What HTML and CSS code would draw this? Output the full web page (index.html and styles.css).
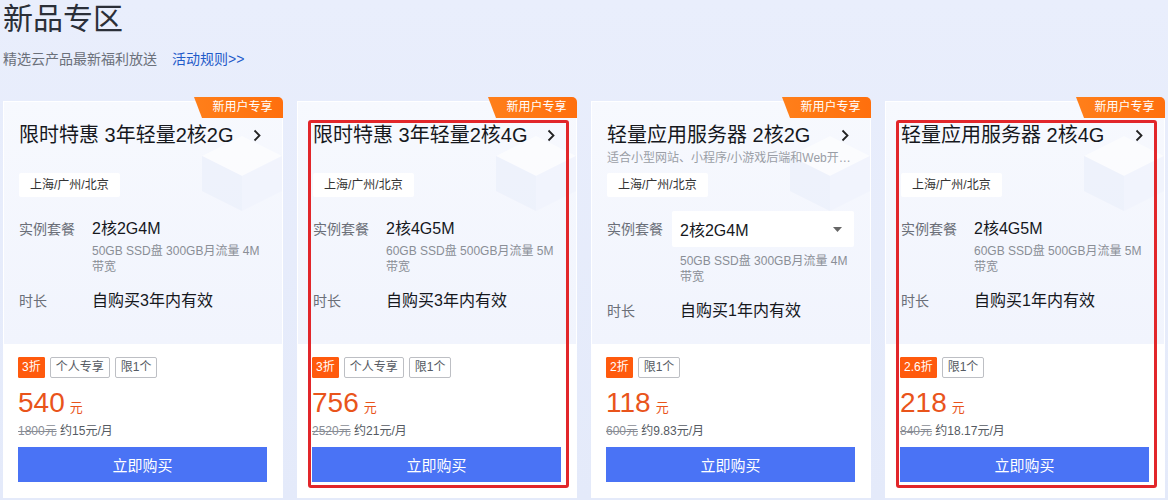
FILE: index.html
```html
<!DOCTYPE html>
<html lang="zh-CN">
<head>
<meta charset="utf-8">
<title>新品专区</title>
<link rel="stylesheet" href="styles.css">
</head>
<body>
<div class="page">
  <header class="hd">
    <h1 class="hd-title">新品专区</h1>
    <p class="hd-sub">精选云产品最新福利放送<a class="hd-link" href="#">活动规则&gt;&gt;</a></p>
  </header>

  <div class="cards">
    <!-- card 1 -->
    <div class="card">
      <span class="badge">新用户专享</span>
      <div class="card-top">
        <svg class="decor" width="110" height="110" viewBox="0 0 110 110"><path d="M20 40 L60 20 L100 40 L60 60 Z" fill="#fff"/><path d="M20 40 L60 60 L60 95 L20 75 Z" fill="#eaeffb"/><path d="M60 60 L100 40 L100 75 L60 95 Z" fill="#f0f3fd"/></svg>
        <div class="head">
          <div class="title-row"><h3 class="title">限时特惠 3年轻量2核2G</h3><svg class="chev" width="8" height="13" viewBox="0 0 8 13"><path d="M1.5 1.5 L6.5 6.5 L1.5 11.5" fill="none" stroke="#222" stroke-width="1.8"/></svg></div>
        </div>
        <span class="region">上海/广州/北京</span>
        <div class="spec">
          <span class="label">实例套餐</span>
          <div class="spec-val">
            <div class="val">2核2G4M</div>
            <p class="desc">50GB SSD盘 300GB月流量 4M 带宽</p>
          </div>
        </div>
        <div class="spec dur">
          <span class="label">时长</span>
          <div class="val">自购买3年内有效</div>
        </div>
      </div>
      <div class="card-bottom">
        <div class="tags"><span class="tag hot">3折</span><span class="tag">个人专享</span><span class="tag">限1个</span></div>
        <div class="price"><span class="num">540</span><span class="unit">元</span></div>
        <div class="orig"><s>1800元</s> 约15元/月</div>
        <button class="buy">立即购买</button>
      </div>
    </div>

    <!-- card 2 -->
    <div class="card">
      <span class="badge">新用户专享</span>
      <div class="card-top">
        <svg class="decor" width="110" height="110" viewBox="0 0 110 110"><path d="M20 40 L60 20 L100 40 L60 60 Z" fill="#fff"/><path d="M20 40 L60 60 L60 95 L20 75 Z" fill="#eaeffb"/><path d="M60 60 L100 40 L100 75 L60 95 Z" fill="#f0f3fd"/></svg>
        <div class="head">
          <div class="title-row"><h3 class="title">限时特惠 3年轻量2核4G</h3><svg class="chev" width="8" height="13" viewBox="0 0 8 13"><path d="M1.5 1.5 L6.5 6.5 L1.5 11.5" fill="none" stroke="#222" stroke-width="1.8"/></svg></div>
        </div>
        <span class="region">上海/广州/北京</span>
        <div class="spec">
          <span class="label">实例套餐</span>
          <div class="spec-val">
            <div class="val">2核4G5M</div>
            <p class="desc">60GB SSD盘 500GB月流量 5M 带宽</p>
          </div>
        </div>
        <div class="spec dur">
          <span class="label">时长</span>
          <div class="val">自购买3年内有效</div>
        </div>
      </div>
      <div class="card-bottom">
        <div class="tags"><span class="tag hot">3折</span><span class="tag">个人专享</span><span class="tag">限1个</span></div>
        <div class="price"><span class="num">756</span><span class="unit">元</span></div>
        <div class="orig"><s>2520元</s> 约21元/月</div>
        <button class="buy">立即购买</button>
      </div>
      <div class="mark"></div>
    </div>

    <!-- card 3 -->
    <div class="card">
      <span class="badge">新用户专享</span>
      <div class="card-top">
        <svg class="decor" width="110" height="110" viewBox="0 0 110 110"><path d="M20 40 L60 20 L100 40 L60 60 Z" fill="#fff"/><path d="M20 40 L60 60 L60 95 L20 75 Z" fill="#eaeffb"/><path d="M60 60 L100 40 L100 75 L60 95 Z" fill="#f0f3fd"/></svg>
        <div class="head">
          <div class="title-row"><h3 class="title">轻量应用服务器 2核2G</h3><svg class="chev" width="8" height="13" viewBox="0 0 8 13"><path d="M1.5 1.5 L6.5 6.5 L1.5 11.5" fill="none" stroke="#222" stroke-width="1.8"/></svg></div>
          <p class="sub">适合小型网站、小程序/小游戏后端和Web开…</p>
        </div>
        <span class="region">上海/广州/北京</span>
        <div class="spec">
          <span class="label">实例套餐</span>
          <div class="spec-val">
            <div class="select"><span>2核2G4M</span><svg width="9" height="5" viewBox="0 0 9 5"><path d="M0 0 H9 L4.5 5 Z" fill="#666"/></svg></div>
            <p class="desc desc-sel">50GB SSD盘 300GB月流量 4M 带宽</p>
          </div>
        </div>
        <div class="spec dur">
          <span class="label">时长</span>
          <div class="val">自购买1年内有效</div>
        </div>
      </div>
      <div class="card-bottom">
        <div class="tags"><span class="tag hot">2折</span><span class="tag">限1个</span></div>
        <div class="price"><span class="num">118</span><span class="unit">元</span></div>
        <div class="orig"><s>600元</s> 约9.83元/月</div>
        <button class="buy">立即购买</button>
      </div>
    </div>

    <!-- card 4 -->
    <div class="card">
      <span class="badge">新用户专享</span>
      <div class="card-top">
        <svg class="decor" width="110" height="110" viewBox="0 0 110 110"><path d="M20 40 L60 20 L100 40 L60 60 Z" fill="#fff"/><path d="M20 40 L60 60 L60 95 L20 75 Z" fill="#eaeffb"/><path d="M60 60 L100 40 L100 75 L60 95 Z" fill="#f0f3fd"/></svg>
        <div class="head">
          <div class="title-row"><h3 class="title">轻量应用服务器 2核4G</h3><svg class="chev" width="8" height="13" viewBox="0 0 8 13"><path d="M1.5 1.5 L6.5 6.5 L1.5 11.5" fill="none" stroke="#222" stroke-width="1.8"/></svg></div>
        </div>
        <span class="region">上海/广州/北京</span>
        <div class="spec">
          <span class="label">实例套餐</span>
          <div class="spec-val">
            <div class="val">2核4G5M</div>
            <p class="desc">60GB SSD盘 500GB月流量 5M 带宽</p>
          </div>
        </div>
        <div class="spec dur">
          <span class="label">时长</span>
          <div class="val">自购买1年内有效</div>
        </div>
      </div>
      <div class="card-bottom">
        <div class="tags"><span class="tag hot">2.6折</span><span class="tag">限1个</span></div>
        <div class="price"><span class="num">218</span><span class="unit">元</span></div>
        <div class="orig"><s>840元</s> 约18.17元/月</div>
        <button class="buy">立即购买</button>
      </div>
      <div class="mark"></div>
    </div>
  </div>
</div>
</body>
</html>
```

FILE: styles.css
```css
html, body {
  margin: 0;
  height: 500px;
  overflow: hidden;
}
body {
  background: linear-gradient(180deg, #e9eefc 0%, #e4eafa 100%);
  font-family: "Liberation Sans", "Noto Sans CJK SC", sans-serif;
  color: #1f2329;
}
.page {
  padding: 0 3px;
}
.hd-title {
  margin: 0;
  font-size: 30px;
  line-height: 38px;
  font-weight: 400;
  color: #2b2f38;
}
.hd-sub {
  margin: 11px 0 0;
  font-size: 14px;
  line-height: 20px;
  color: #6b707a;
}
.hd-link {
  margin-left: 15px;
  color: #1f5bc9;
  text-decoration: none;
}
.cards {
  display: grid;
  grid-template-columns: repeat(4, minmax(0, 1fr));
  gap: 14px;
  margin-top: 32px;
}
.card {
  position: relative;
  min-width: 0;
  background: #fff;
  border-radius: 2px;
}
.badge {
  position: absolute;
  top: -4px;
  right: 0;
  width: 89px;
  height: 21px;
  padding-left: 8px;
  box-sizing: border-box;
  background: linear-gradient(90deg, #ff7f1a, #ff6f0d);
  color: #fff;
  font-size: 12px;
  line-height: 21px;
  text-align: center;
  border-radius: 0 5px 0 0;
  clip-path: polygon(0 0, 100% 0, 100% 100%, 8px 100%);
  z-index: 2;
}
.card-top {
  position: relative;
  height: 243px;
  box-sizing: border-box;
  padding: 19px 16px 0 15px;
  background: linear-gradient(180deg, #f7f9fe 0%, #f1f4fd 100%);
  border: 1px solid #fff;
  border-bottom: 0;
  overflow: hidden;
}
.decor {
  position: absolute;
  top: 14px;
  right: -10px;
  opacity: 0.6;
  pointer-events: none;
}
.head {
  position: relative;
  min-height: 46px;
  margin-bottom: 6px;
}
.title-row {
  display: flex;
  align-items: center;
  justify-content: space-between;
  gap: 8px;
}
.title {
  margin: 0;
  min-width: 0;
  font-size: 20px;
  line-height: 28px;
  font-weight: 400;
  color: #16181d;
  white-space: nowrap;
}
.chev {
  margin-right: 5px;
  flex: none;
}
.sub {
  margin: 0;
  font-size: 12px;
  line-height: 18px;
  color: #9a9ea6;
  white-space: nowrap;
}
.region {
  position: relative;
  display: inline-block;
  height: 24px;
  line-height: 24px;
  padding: 0 11px;
  background: #fff;
  font-size: 12px;
  color: #333;
  border-radius: 2px;
}
.spec {
  position: relative;
  display: flex;
  margin-top: 14px;
}
.label {
  flex: none;
  width: 73px;
  padding-top: 6px;
  font-size: 14px;
  line-height: 24px;
  color: #6b6f78;
}
.spec-val {
  flex: 1;
  min-width: 0;
}
.val {
  padding-top: 6px;
  font-size: 16px;
  line-height: 24px;
  color: #16181d;
}
.dur .label,
.dur .val {
  padding-top: 0;
}
.desc {
  margin: 2px -4px 0 0;
  font-size: 12px;
  line-height: 16px;
  color: #8a8e96;
}
.select {
  display: flex;
  align-items: center;
  justify-content: space-between;
  height: 36px;
  margin-left: -8px;
  padding: 0 12px 0 8px;
  background: #fff;
  border-radius: 2px;
  font-size: 16px;
  color: #16181d;
}
.desc-sel {
  margin-top: 6px;
}
.card-bottom {
  padding: 13px 16px 16px 15px;
  background: #fff;
}
.tags {
  display: flex;
  gap: 5px;
  height: 21px;
}
.tag {
  box-sizing: border-box;
  height: 21px;
  line-height: 19px;
  padding: 0 5px;
  border: 1px solid #bdbfc4;
  border-radius: 2px;
  font-size: 12px;
  color: #555a62;
}
.tag.hot {
  background: #ff5a0d;
  border-color: #ff5a0d;
  color: #fff;
  padding: 0 3px;
  border-radius: 1px;
}
.price {
  margin-top: 8px;
  height: 34px;
  line-height: 34px;
  color: #e9541b;
}
.num {
  font-size: 28px;
}
.unit {
  margin-left: 5px;
  font-size: 13px;
}
.orig {
  margin-top: 2px;
  font-size: 12px;
  line-height: 18px;
  color: #555a62;
}
.orig s {
  color: #888c94;
}
.buy {
  display: block;
  width: 100%;
  height: 35px;
  margin-top: 7px;
  border: 0;
  border-radius: 0;
  background: #4a73f5;
  color: #fff;
  font-family: "Liberation Sans", "Noto Sans CJK SC", sans-serif;
  font-size: 15px;
  cursor: pointer;
}
.mark {
  position: absolute;
  top: 19px;
  left: 11px;
  right: 8px;
  bottom: 10px;
  border: 3px solid #e2262a;
  border-radius: 3px;
  pointer-events: none;
  z-index: 3;
}
```
